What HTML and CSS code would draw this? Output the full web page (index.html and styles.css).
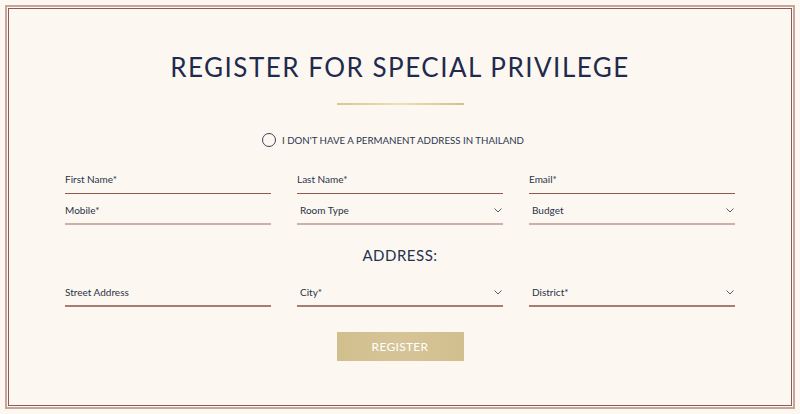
FILE: index.html
```html
<!DOCTYPE html>
<html lang="en">
<head>
    <meta charset="UTF-8">
    <meta name="viewport" content="width=device-width, initial-scale=1.0">
    <title>Register for Special Privilege</title>
    <link rel="stylesheet" href="styles.css">
</head>
<body>
    <div class="frame">
        <div class="frame-inner">
            <h1 class="title">REGISTER FOR SPECIAL PRIVILEGE</h1>
            <div class="gold-line"></div>

            <label class="no-address">
                <input type="radio" name="noAddress">
                <span>I DON'T HAVE A PERMANENT ADDRESS IN THAILAND</span>
            </label>

            <form class="reg-form" id="regForm">
                <div class="form-grid">
                    <div class="field field-top"><input type="text" placeholder="First Name*"></div>
                    <div class="field field-top"><input type="text" placeholder="Last Name*"></div>
                    <div class="field field-top"><input type="email" placeholder="Email*"></div>

                    <div class="field field-light"><input type="tel" placeholder="Mobile*"></div>
                    <div class="field field-light">
                        <select>
                            <option>Room Type</option>
                        </select>
                        <svg class="chevron" width="8" height="5" viewBox="0 0 8 5"><path d="M0.5 0.5 L4 4 L7.5 0.5" fill="none" stroke="#5a5f6c" stroke-width="1"/></svg>
                    </div>
                    <div class="field field-light">
                        <select>
                            <option>Budget</option>
                        </select>
                        <svg class="chevron" width="8" height="5" viewBox="0 0 8 5"><path d="M0.5 0.5 L4 4 L7.5 0.5" fill="none" stroke="#5a5f6c" stroke-width="1"/></svg>
                    </div>
                </div>

                <h2 class="address-title">ADDRESS:</h2>

                <div class="form-grid">
                    <div class="field field-mid"><input type="text" placeholder="Street Address"></div>
                    <div class="field field-mid">
                        <select>
                            <option>City*</option>
                        </select>
                        <svg class="chevron" width="8" height="5" viewBox="0 0 8 5"><path d="M0.5 0.5 L4 4 L7.5 0.5" fill="none" stroke="#5a5f6c" stroke-width="1"/></svg>
                    </div>
                    <div class="field field-mid">
                        <select>
                            <option>District*</option>
                        </select>
                        <svg class="chevron" width="8" height="5" viewBox="0 0 8 5"><path d="M0.5 0.5 L4 4 L7.5 0.5" fill="none" stroke="#5a5f6c" stroke-width="1"/></svg>
                    </div>
                </div>

                <button type="submit" class="register-btn">REGISTER</button>
            </form>
        </div>
    </div>
</body>
</html>
```

FILE: styles.css
```css
html, body {
    margin: 0;
    padding: 0;
    background-color: #fcf8f1;
}
body {
    font-family: Lato, "Noto Sans", sans-serif;
    color: #253150;
}
.frame {
    margin: 5px;
    height: 404px;
    box-sizing: border-box;
    border: 2px solid #c5a59c;
    padding: 1px;
}
.frame-inner {
    height: 100%;
    box-sizing: border-box;
    border: 1px solid #8c5c51;
    text-align: center;
}
.title {
    margin: 0;
    padding-top: 42px;
    font-family: Lato, sans-serif;
    font-weight: 400;
    font-size: 26px;
    line-height: 32px;
    letter-spacing: 1.5px;
    color: #1e2b4d;
}
.gold-line {
    width: 127px;
    height: 2px;
    margin: 20px auto 0;
    background: linear-gradient(90deg, #d8c690, #ece0b6 50%, #d4c08a);
}
.no-address {
    display: inline-flex;
    align-items: center;
    gap: 6px;
    margin-top: 27px;
    margin-right: 14px;
    height: 16px;
    font-size: 9.7px;
    color: #2b3550;
    cursor: pointer;
}
.no-address input {
    appearance: none;
    margin: 0;
    width: 14px;
    height: 14px;
    border: 1px solid #3a4258;
    border-radius: 50%;
    background: transparent;
}
.reg-form {
    width: 670px;
    margin: 20px auto 0;
}
.form-grid {
    display: grid;
    grid-template-columns: repeat(3, 206px);
    column-gap: 26px;
    row-gap: 7px;
    text-align: left;
}
.field {
    position: relative;
    display: flex;
    align-items: flex-start;
    height: 24px;
    box-sizing: border-box;
    padding-top: 2px;
    border-bottom: 1px solid #8c5c51;
}
.field-light {
    border-bottom: 2px solid #cbb0a8;
}
.field-mid {
    border-bottom: 2px solid #a77d73;
}
.field input,
.field select {
    appearance: none;
    width: 100%;
    height: 14px;
    box-sizing: border-box;
    margin: 0;
    padding: 0;
    border: none;
    background: transparent;
    font-family: Lato, "Noto Sans", sans-serif;
    font-size: 10px;
    line-height: 14px;
    color: #2a3248;
    outline: none;
}
.field select {
    padding-left: 3px;
}
.field input::placeholder {
    color: #2a3248;
    opacity: 1;
}
.chevron {
    position: absolute;
    right: 1px;
    top: 7px;
    pointer-events: none;
}
.address-title {
    margin: 20px 0 18px;
    font-weight: 400;
    font-size: 15px;
    line-height: 20px;
    letter-spacing: 0.5px;
    color: #253150;
}
.register-btn {
    display: block;
    width: 127px;
    height: 29px;
    margin: 25px auto 0;
    border: none;
    background: linear-gradient(90deg, #d2bf8e, #d6c498 50%, #d2bf8e);
    color: #ffffff;
    font-family: Lato, sans-serif;
    font-size: 12px;
    letter-spacing: 0.3px;
    cursor: pointer;
}
```
